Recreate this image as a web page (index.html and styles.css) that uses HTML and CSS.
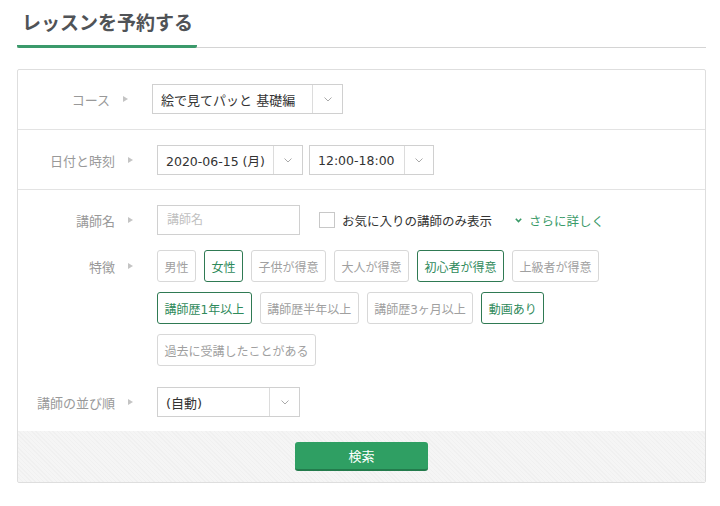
FILE: index.html
```html
<!DOCTYPE html>
<html lang="ja">
<head>
<meta charset="utf-8">
<title>レッスンを予約する</title>
<link rel="stylesheet" href="styles.css">
</head>
<body>
<div class="page">
  <div class="heading">
    <h1 class="heading__title">レッスンを予約する</h1>
  </div>

  <form class="card">
    <div class="section section--course">
      <div class="field field--course">
        <div class="label">コース<span class="tri"></span></div>
        <div class="select select--course">
          <span class="select__value">絵で見てパッと 基礎編</span>
          <span class="select__arrow"><svg width="8" height="5" viewBox="0 0 8 5"><polyline points="0.5,0.5 4,4 7.5,0.5" fill="none" stroke="#aaa" stroke-width="1"/></svg></span>
        </div>
      </div>
    </div>

    <div class="section">
      <div class="field">
        <div class="label">日付と時刻<span class="tri"></span></div>
        <div class="controls">
          <div class="select select--date">
            <span class="select__value">2020-06-15 (月)</span>
            <span class="select__arrow"><svg width="8" height="5" viewBox="0 0 8 5"><polyline points="0.5,0.5 4,4 7.5,0.5" fill="none" stroke="#aaa" stroke-width="1"/></svg></span>
          </div>
          <div class="select select--time">
            <span class="select__value">12:00-18:00</span>
            <span class="select__arrow"><svg width="8" height="5" viewBox="0 0 8 5"><polyline points="0.5,0.5 4,4 7.5,0.5" fill="none" stroke="#aaa" stroke-width="1"/></svg></span>
          </div>
        </div>
      </div>
    </div>

    <div class="section section--filters">
      <div class="field">
        <div class="label">講師名<span class="tri"></span></div>
        <div class="controls">
          <input class="text-input" type="text" placeholder="講師名">
          <label class="check"><span class="check__box"></span>お気に入りの講師のみ表示</label>
          <span class="more"><svg width="7" height="5" viewBox="0 0 7 5"><polyline points="0.8,0.8 3.5,3.6 6.2,0.8" fill="none" stroke="#3a9a68" stroke-width="1.6"/></svg>さらに詳しく</span>
        </div>
      </div>

      <div class="field field--tags">
        <div class="label label--tall">特徴<span class="tri"></span></div>
        <div class="tags">
          <div class="tag-row">
            <span class="tag">男性</span>
            <span class="tag tag--on">女性</span>
            <span class="tag">子供が得意</span>
            <span class="tag">大人が得意</span>
            <span class="tag tag--on">初心者が得意</span>
            <span class="tag">上級者が得意</span>
          </div>
          <div class="tag-row">
            <span class="tag tag--on">講師歴1年以上</span>
            <span class="tag">講師歴半年以上</span>
            <span class="tag">講師歴3ヶ月以上</span>
            <span class="tag tag--on">動画あり</span>
          </div>
          <div class="tag-row">
            <span class="tag">過去に受講したことがある</span>
          </div>
        </div>
      </div>

      <div class="field field--sort">
        <div class="label">講師の並び順<span class="tri"></span></div>
        <div class="select select--sort">
          <span class="select__value">(自動)</span>
          <span class="select__arrow"><svg width="8" height="5" viewBox="0 0 8 5"><polyline points="0.5,0.5 4,4 7.5,0.5" fill="none" stroke="#aaa" stroke-width="1"/></svg></span>
        </div>
      </div>
    </div>

    <div class="footer">
      <button class="btn" type="button">検索</button>
    </div>
  </form>
</div>
</body>
</html>
```

FILE: styles.css
```css
* { box-sizing: border-box; }

html, body {
  margin: 0;
  padding: 0;
  background: #fff;
}

body {
  font-family: "DejaVu Sans", "Noto Sans CJK JP", sans-serif;
  color: #333;
  font-size: 13px;
}

.page {
  width: 720px;
  padding: 0 14px 0 17px;
}

/* heading */
.heading {
  border-bottom: 1px solid #d4d4d4;
}

.heading__title {
  display: block;
  width: 180px;
  margin: 0 0 -1px;
  padding: 8px 5px 9px;
  font-family: "Noto Sans CJK JP", sans-serif;
  font-size: 19px;
  line-height: 28px;
  font-weight: 700;
  color: #505357;
  border-bottom: 3px solid #3b9a6b;
  border-radius: 0 0 2px 2px;
  white-space: nowrap;
}

/* card */
.card {
  margin: 21px 0 0;
  border: 1px solid #dedede;
  border-radius: 2px;
  background: #fff;
}

.section {
  padding: 15px 0 14px;
  border-bottom: 1px solid #e3e3e3;
}

.section--course {
  padding: 14px 0 15px;
}

.section--filters {
  border-bottom: none;
  padding: 15px 0 14px;
}

.field {
  display: grid;
  grid-template-columns: 139px 1fr;
  align-items: start;
}

.field--course {
  grid-template-columns: 134px 1fr;
}

.field--tags {
  margin-top: 15px;
}

.field--sort {
  margin-top: 21px;
}

.label {
  height: 30px;
  display: flex;
  align-items: center;
  justify-content: flex-end;
  gap: 13px;
  padding-right: 24px;
  color: #999;
  font-size: 13px;
  white-space: nowrap;
}

.label--tall {
  height: 32px;
}

.tri {
  width: 0;
  height: 0;
  border-left: 5px solid #c4c4c4;
  border-top: 3.5px solid transparent;
  border-bottom: 3.5px solid transparent;
}

.controls {
  display: flex;
  align-items: center;
  gap: 6px;
}

/* select */
.select {
  height: 30px;
  display: flex;
  border: 1px solid #d0d0d0;
  background: #fff;
}

.select__value {
  flex: 1;
  display: flex;
  align-items: center;
  padding-left: 8px;
  color: #333;
  font-size: 13px;
  white-space: nowrap;
}

.select__arrow {
  width: 29px;
  display: flex;
  align-items: center;
  justify-content: center;
  border-left: 1px solid #dcdcdc;
}

.select--course { width: 191px; }
.select--course .select__arrow { width: 30px; }
.select--date { width: 146px; }
.select--time { width: 125px; }
.select--date .select__value,
.select--time .select__value { font-size: 12.5px; }
.select--sort { width: 143px; }
.select--sort .select__arrow { width: 30px; }

/* text input */
.text-input {
  width: 143px;
  height: 30px;
  margin: 0;
  padding: 0 9px;
  border: 1px solid #d0d0d0;
  border-radius: 0;
  font-family: inherit;
  font-size: 12px;
  color: #333;
  outline: none;
}

.text-input::placeholder {
  color: #c0c0c0;
}

.check {
  display: flex;
  align-items: center;
  gap: 7px;
  margin-left: 13px;
  font-size: 12.5px;
  color: #333;
  white-space: nowrap;
}

.check__box {
  width: 16px;
  height: 16px;
  border: 1px solid #c8c8c8;
  background: #fff;
}

.more {
  display: flex;
  align-items: center;
  gap: 7px;
  margin-left: 17px;
  color: #3a9a68;
  font-size: 12.5px;
  white-space: nowrap;
}

/* tags */
.tags {
  display: flex;
  flex-direction: column;
  gap: 10px;
}

.tag-row {
  display: flex;
  gap: 8px;
}

.tag {
  height: 32px;
  display: inline-flex;
  align-items: center;
  padding: 0 6.5px;
  border: 1px solid #d8d8d8;
  border-radius: 3px;
  color: #a0a0a0;
  font-size: 12px;
  white-space: nowrap;
  background: #fff;
}

.tag--on {
  border-color: #2f7a53;
  color: #2f8a5b;
}

/* footer */
.footer {
  display: flex;
  justify-content: center;
  padding: 11px 0 11px;
  background-color: #f5f5f5;
  background-image: repeating-linear-gradient(45deg, rgba(0,0,0,0.018) 0 1px, transparent 1px 3px);
}

.btn {
  width: 133px;
  height: 29px;
  margin: 0;
  padding: 0;
  border: none;
  border-bottom: 2px solid #237b4c;
  border-radius: 3px;
  background: #2f9f63;
  color: #fff;
  font-family: "Noto Sans CJK JP", sans-serif;
  font-size: 13px;
  cursor: pointer;
}
```
